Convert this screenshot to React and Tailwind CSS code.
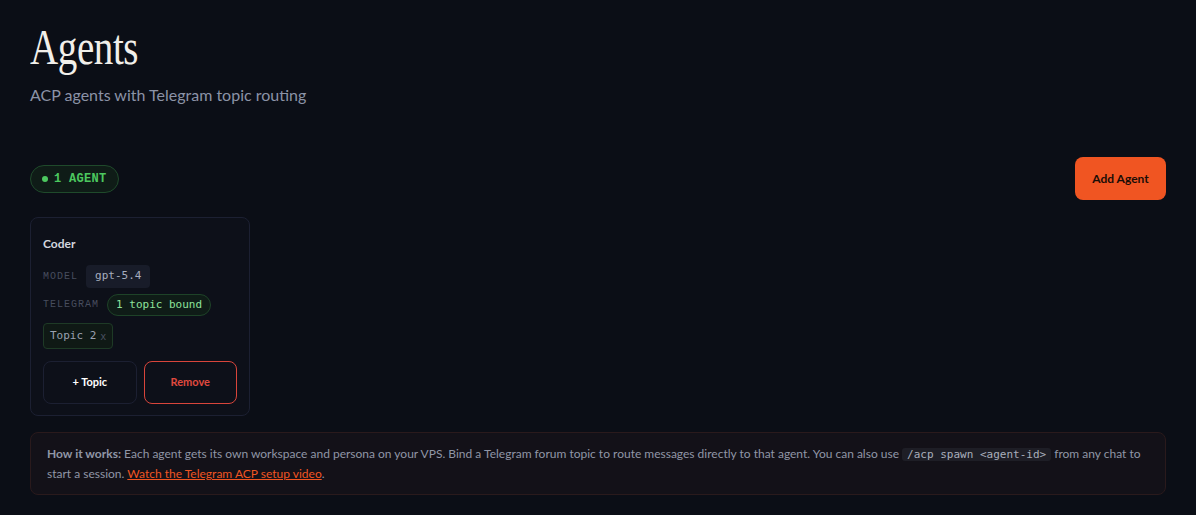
import React from "react";

const sans = { fontFamily: "Lato, 'Noto Sans', sans-serif" };
const mono = { fontFamily: "'DejaVu Sans Mono', monospace" };

export default function App() {
  return (
    <div className="min-h-screen w-full bg-[#0b0e16] text-white px-[30px] pt-[18px]" style={sans}>
      <h1
        className="inline-block origin-left scale-x-[0.78] text-[50px] leading-[58px] text-[#f1efea] tracking-[-0.5px]"
        style={{ fontFamily: "'Liberation Serif', serif" }}
      >
        Agents
      </h1>
      <p className="mt-[8px] text-[16px] leading-[22px] text-[#8b93a7]">ACP agents with Telegram topic routing</p>

      <div className="mt-[51px] flex items-center justify-between">
        <div className="flex h-[28px] items-center gap-[6px] rounded-full border border-[#1f4a2b] bg-[#0f1c17] px-[11px] text-[12px] font-bold tracking-[0.3px] text-[#4cc85f]" style={{ fontFamily: "'Liberation Mono', monospace" }}>
          <span className="h-[6px] w-[6px] rounded-full bg-[#4cc85f]" />
          1 AGENT
        </div>
        <button className="h-[43px] w-[91px] rounded-lg bg-[#f05522] text-[12px] font-bold text-[#1a0d07]">
          Add Agent
        </button>
      </div>

      <div className="mt-[17px] w-[220px] rounded-lg border border-[#1c2032] bg-[#0d1019] px-[12px] pt-[17px] pb-[11px]">
        <div className="text-[12px] font-bold text-[#d3d6de]">Coder</div>
        <div className="mt-[12px] flex items-center gap-[8px]">
          <span className="text-[10px] tracking-[1px] text-[#474d5e]" style={{ fontFamily: "'Liberation Mono', monospace" }}>MODEL</span>
          <span className="rounded-[4px] bg-[#181c29] px-[9px] py-[3px] text-[11px] text-[#a6adbd]" style={mono}>gpt-5.4</span>
        </div>
        <div className="mt-[6px] flex items-center gap-[8px]">
          <span className="text-[10px] tracking-[1px] text-[#474d5e]" style={{ fontFamily: "'Liberation Mono', monospace" }}>TELEGRAM</span>
          <span className="rounded-full border border-[#1e4328] bg-[#0f1c17] px-[8px] py-[2px] text-[11px] text-[#8ee39b]" style={mono}>1 topic bound</span>
        </div>
        <div className="mt-[7px] flex">
          <span className="flex h-[26px] items-center gap-[4px] rounded-[4px] border border-[#1e3a26] bg-[#0f1915] px-[6px] text-[11px] text-[#9aa1b0]" style={mono}>
            Topic 2 <span className="text-[10px] text-[#4b5262]">x</span>
          </span>
        </div>
        <div className="mt-[12px] flex gap-[7px]">
          <button className="h-[43px] flex-1 rounded-lg border border-[#1c2032] text-[11px] font-bold text-white">+ Topic</button>
          <button className="h-[43px] flex-1 rounded-lg border border-[#d8453b] text-[11px] font-bold text-[#e04a3f]">Remove</button>
        </div>
      </div>

      <div className="mt-[16px] rounded-lg border border-[#2a1a1c] bg-[#131118] px-[16px] py-[11px] text-[12px] leading-[19px] text-[#9096a6]">
        <span className="font-bold">How it works:</span> Each agent gets its own workspace and persona on your VPS. Bind a Telegram forum topic to route messages directly to that agent. You can also use{" "}
        <code className="rounded-[3px] bg-[#1e1e26] px-[5px] text-[11px] text-[#a9aebb]" style={mono}>/acp spawn &lt;agent-id&gt;</code>{" "}
        from any chat to start a session. <a className="text-[#f05522] underline">Watch the Telegram ACP setup video</a>.
      </div>
    </div>
  );
}
